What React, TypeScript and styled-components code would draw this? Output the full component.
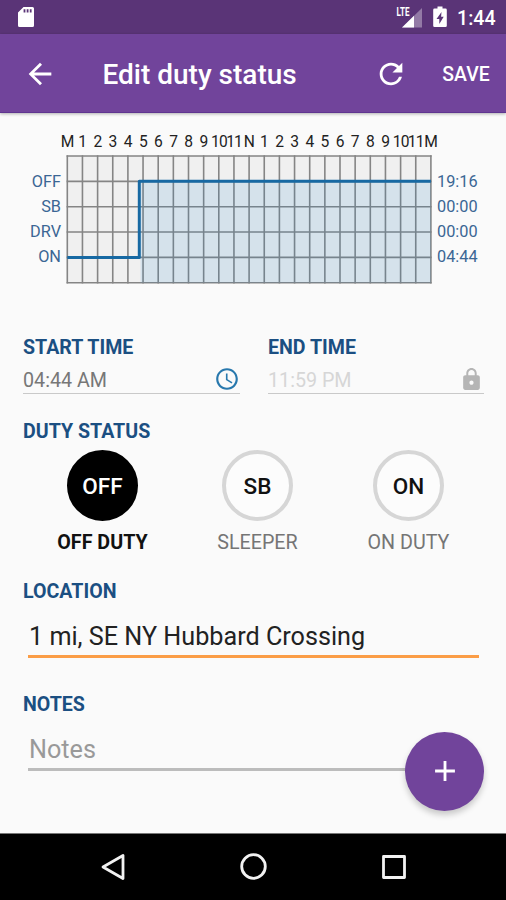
import React from "react";
import styled, { createGlobalStyle } from "styled-components";
import { MdArrowBack, MdRefresh, MdLock, MdAccessTime, MdAdd } from "react-icons/md";

const GlobalStyle = createGlobalStyle`
  * { box-sizing: border-box; }
  body { margin: 0; background: #fafafa; }
  button { border: 0; padding: 0; margin: 0; background: none; font: inherit; color: inherit; }
  svg { display: block; flex: none; }
`;

const Screen = styled.div`
  position: relative;
  display: flex;
  flex-direction: column;
  width: 506px;
  height: 900px;
  overflow: hidden;
  background: #fafafa;
  font-family: Roboto, "Liberation Sans", sans-serif;
`;

const StatusBar = styled.div`
  display: flex;
  align-items: center;
  height: 34px;
  padding: 0 10px 0 17px;
  background: #5a3477;
  color: #fff;
`;

const StatusIcons = styled.div`
  display: flex;
  align-items: center;
  gap: 10px;
  margin-left: auto;
`;

const Clock = styled.span`
  width: 39px;
  margin-top: 3px;
  font-size: 19.6px;
  line-height: 22px;
  font-weight: 500;
  white-space: nowrap;
`;

const AppBar = styled.header`
  display: flex;
  align-items: center;
  height: 79px;
  padding: 2px 16px 0 22.5px;
  background: #71449b;
  border-bottom: 1px solid #5f3590;
  color: #fff;
  box-shadow: 0 1px 3px rgba(0, 0, 0, 0.3);
`;

const IconButton = styled.button`
  display: flex;
  width: 34px;
  height: 34px;
`;

const Title = styled.h1`
  flex: 1;
  margin: 0 0 0 46px;
  font-size: 28px;
  line-height: 34px;
  font-weight: 500;
  padding-top: 2px;
`;

const SaveButton = styled.button`
  width: 48px;
  margin-left: 34px;
  padding-top: 2px;
  font-size: 19.4px;
  line-height: 24px;
  font-weight: 500;
`;

const Content = styled.main`
  flex: 1;
  display: flex;
  flex-direction: column;
  padding: 19px 22px 0 23px;
`;

const LogGraph = styled.section`
  display: grid;
  grid-template-columns: 38px 376px 46px;
  grid-template-rows: 23px 129px;
  height: 152px;
`;

const Hours = styled.div`
  grid-column: 2;
  display: grid;
  grid-template-columns: repeat(25, 15.15px);
  margin-left: -1px;
`;

const Hour = styled.span<{ $wide: boolean }>`
  display: flex;
  justify-content: center;
  font-size: 15.6px;
  line-height: 20px;
  letter-spacing: ${(p) => (p.$wide ? "-0.8px" : "0")};
  color: #222;
  white-space: nowrap;
`;

const GraphLabels = styled.div<{ $align: "left" | "right" }>`
  grid-row: 2;
  grid-column: ${(p) => (p.$align === "right" ? 1 : 3)};
  padding-top: 13.6px;
  font-size: 16.3px;
  line-height: 25.3px;
  text-align: ${(p) => p.$align};
  color: #3b6694;
`;

const GraphArea = styled.div`
  grid-row: 2;
  grid-column: 2;
  padding-left: 5px;
`;

const TimeFields = styled.section`
  display: grid;
  grid-template-columns: 217px 216px;
  column-gap: 28px;
  margin-top: 51px;
`;

const SectionTitle = styled.h2`
  margin: 0;
  font-size: 19.6px;
  line-height: 26px;
  font-weight: 700;
  color: #1b4f82;
  white-space: nowrap;
`;

const TimeValue = styled.div<{ $disabled?: boolean }>`
  display: flex;
  align-items: center;
  justify-content: space-between;
  height: 33px;
  border-bottom: 1px solid #c9c9c9;
  font-size: 19.7px;
  color: ${(p) => (p.$disabled ? "#d6d6d6" : "#777")};
  padding: 7px 0 0;
`;

const FieldIcon = styled.span<{ $color: string }>`
  display: flex;
  color: ${(p) => p.$color};
  margin-bottom: 3px;
`;

const DutySection = styled.section`
  margin-top: 25px;
`;

const DutyOptions = styled.div`
  display: grid;
  grid-template-columns: 159px 151px 151px;
  margin-top: 5px;
`;

const DutyOption = styled.button`
  display: flex;
  flex-direction: column;
  align-items: center;
`;

const DutyCircle = styled.span<{ $active?: boolean }>`
  display: flex;
  align-items: center;
  justify-content: center;
  width: 71px;
  height: 71px;
  border-radius: 50%;
  border: 4px solid ${(p) => (p.$active ? "#000" : "#d6d6d6")};
  background: ${(p) => (p.$active ? "#000" : "#fcfcfc")};
  color: ${(p) => (p.$active ? "#fff" : "#111")};
  font-size: 22.5px;
  font-weight: 500;
`;

const DutyLabel = styled.span<{ $active?: boolean }>`
  margin-top: 9px;
  font-size: 19.7px;
  line-height: 26px;
  font-weight: ${(p) => (p.$active ? 700 : 400)};
  color: ${(p) => (p.$active ? "#111" : "#757575")};
`;

const TextSection = styled.section<{ $gap: number }>`
  margin-top: ${(p) => p.$gap}px;
`;

const TextField = styled.div<{ $line: string; $color: string }>`
  margin: 15px 5px 0;
  padding-left: 1px;
  height: 38px;
  border-bottom: 3px solid ${(p) => p.$line};
  font-size: 25.2px;
  line-height: 34px;
  color: ${(p) => p.$color};
`;

const Fab = styled.button`
  position: absolute;
  left: 405px;
  top: 731.5px;
  display: flex;
  align-items: center;
  justify-content: center;
  width: 79px;
  height: 79px;
  border-radius: 50%;
  background: #71449b;
  color: #fff;
  box-shadow: 0 4px 6px rgba(0, 0, 0, 0.2);
`;

const NavBar = styled.nav`
  display: flex;
  align-items: center;
  justify-content: space-between;
  height: 67px;
  padding: 0 94px 0 95px;
  border-top: 1px solid #777;
  background: #000;
`;

const HOURS = ["M", "1", "2", "3", "4", "5", "6", "7", "8", "9", "10", "11", "N", "1", "2", "3", "4", "5", "6", "7", "8", "9", "10", "11", "M"];
const COL = 15.15;
const ROW = 25.35;

function DutyGraph() {
  const right = 1.3 + COL * 24;
  const bottom = 1 + ROW * 5;
  return (
    <svg width="368" height="130" viewBox="0 0 368 130">
      <rect x="1.3" y="1" width={right - 1.3} height={bottom - 1} fill="#f0f0f0" />
      <g stroke="#858585" strokeWidth="1.6">
        {Array.from({ length: 25 }, (_, i) => (
          <line key={i} x1={1.3 + i * COL} x2={1.3 + i * COL} y1="0.3" y2={bottom + 0.7} />
        ))}
        {Array.from({ length: 6 }, (_, i) => (
          <line key={i} x1="0.6" x2={right + 0.7} y1={1 + i * ROW} y2={1 + i * ROW} />
        ))}
      </g>
      <rect x="74.5" y={1 + ROW} width={right - 74.5} height={ROW * 4} fill="#1d86c8" fillOpacity="0.13" />
      <path
        d={`M1.3 ${1 + ROW * 4}H73.3V${1 + ROW}H${right}`}
        fill="none"
        stroke="#1769a3"
        strokeWidth="3"
        strokeLinejoin="round"
      />
    </svg>
  );
}

function SdCardIcon() {
  return (
    <svg width="18" height="22" viewBox="0 0 18 22">
      <path
        fill="#fff"
        fillRule="evenodd"
        d="M6.5 1H15.5Q17 1 17 2.5V19.500Q17 21 15.500 21H2.500Q1 21 1 19.500V6.500ZM6.600 3.200V6.400H8.400V3.200ZM9.700 3.200V6.400H11.500V3.200ZM12.800 3.200V6.400H14.600V3.200Z"
      />
    </svg>
  );
}

function SignalIcon() {
  return (
    <svg width="27" height="24" viewBox="0 0 27 24">
      <path fill="#fff" fillOpacity="0.35" d="M26 3V22.500H6Z" />
      <path fill="#fff" d="M18 10.800V22.500H6Z" />
      <text x="0.500" y="11" fill="#fff" fontSize="12" fontWeight="700" textLength="13" lengthAdjust="spacingAndGlyphs">
        LTE
      </text>
    </svg>
  );
}

function BatteryIcon() {
  return (
    <svg width="14" height="22" viewBox="0 0 14 22">
      <path fill="#fff" d="M4.500 0.500H9.500V2.600H12.500Q13.800 2.600 13.800 3.900V19.700Q13.800 21 12.500 21H1.500Q0.200 21 0.200 19.700V3.900Q0.200 2.600 1.500 2.600H4.500Z" />
      <path fill="#5a3477" d="M8.500 6L3.500 13H6.300V18L10.700 10.800H8.100Z" />
    </svg>
  );
}

export default function App() {
  return (
    <Screen>
      <GlobalStyle />
      <StatusBar>
        <SdCardIcon />
        <StatusIcons>
          <SignalIcon />
          <BatteryIcon />
          <Clock>1:44</Clock>
        </StatusIcons>
      </StatusBar>
      <AppBar>
        <IconButton aria-label="Back"><MdArrowBack size={34} /></IconButton>
        <Title>Edit duty status</Title>
        <IconButton aria-label="Reset"><MdRefresh size={34} /></IconButton>
        <SaveButton>SAVE</SaveButton>
      </AppBar>
      <Content>
        <LogGraph>
          <Hours>
            {HOURS.map((h, i) => <Hour key={i} $wide={h.length > 1}>{h}</Hour>)}
          </Hours>
          <GraphLabels $align="right">
            <div>OFF</div><div>SB</div><div>DRV</div><div>ON</div>
          </GraphLabels>
          <GraphArea><DutyGraph /></GraphArea>
          <GraphLabels $align="left">
            <div>19:16</div><div>00:00</div><div>00:00</div><div>04:44</div>
          </GraphLabels>
        </LogGraph>
        <TimeFields>
          <div>
            <SectionTitle>START TIME</SectionTitle>
            <TimeValue>
              04:44 AM
              <FieldIcon $color="#2878ad"><MdAccessTime size={26} /></FieldIcon>
            </TimeValue>
          </div>
          <div>
            <SectionTitle>END TIME</SectionTitle>
            <TimeValue $disabled>
              11:59 PM
              <FieldIcon $color="#b5b5b5"><MdLock size={25} /></FieldIcon>
            </TimeValue>
          </div>
        </TimeFields>
        <DutySection>
          <SectionTitle>DUTY STATUS</SectionTitle>
          <DutyOptions>
            <DutyOption>
              <DutyCircle $active>OFF</DutyCircle>
              <DutyLabel $active>OFF DUTY</DutyLabel>
            </DutyOption>
            <DutyOption>
              <DutyCircle>SB</DutyCircle>
              <DutyLabel>SLEEPER</DutyLabel>
            </DutyOption>
            <DutyOption>
              <DutyCircle>ON</DutyCircle>
              <DutyLabel>ON DUTY</DutyLabel>
            </DutyOption>
          </DutyOptions>
        </DutySection>
        <TextSection $gap={23}>
          <SectionTitle>LOCATION</SectionTitle>
          <TextField $line="#fb9d46" $color="#222">1 mi, SE NY Hubbard Crossing</TextField>
        </TextSection>
        <TextSection $gap={34}>
          <SectionTitle>NOTES</SectionTitle>
          <TextField $line="#bcbcbc" $color="#999">Notes</TextField>
        </TextSection>
      </Content>
      <Fab aria-label="Add"><MdAdd size={34} /></Fab>
      <NavBar>
        <svg width="36" height="36" viewBox="0 0 36 36" fill="none" stroke="#f2f2f2" strokeWidth="2.800" strokeLinejoin="round">
          <path d="M28 6.500V29.500L8 18Z" />
        </svg>
        <svg width="36" height="36" viewBox="0 0 36 36" fill="none" stroke="#f2f2f2" strokeWidth="2.800">
          <circle cx="17.500" cy="17.500" r="11.800" />
        </svg>
        <svg width="36" height="36" viewBox="0 0 36 36" fill="none" stroke="#f2f2f2" strokeWidth="2.800" strokeLinejoin="round">
          <rect x="7.500" y="7.500" width="21" height="21" />
        </svg>
      </NavBar>
    </Screen>
  );
}
